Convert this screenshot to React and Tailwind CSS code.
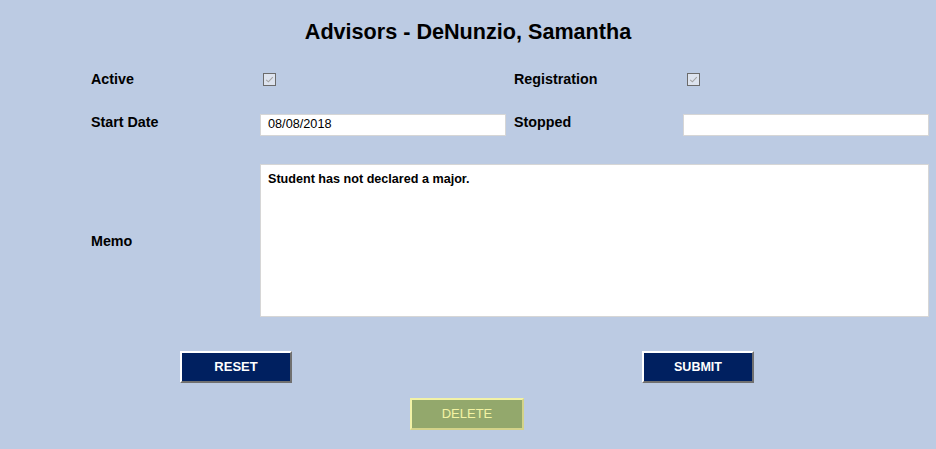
import React from 'react';

function Check() {
  return (
    <svg width="13" height="13" viewBox="0 0 13 13" className="block">
      <rect x="0.5" y="0.5" width="12" height="12" fill="#dde3ee" stroke="#6b6b6b" />
      <path d="M3.2 6.8 L5.4 8.8 L9.8 4.2" fill="none" stroke="#a3a3a3" strokeWidth="1.1" />
    </svg>
  );
}

export default function App() {
  return (
    <div
      className="w-[936px] h-[449px] bg-[#bccbe3] text-black overflow-hidden"
      style={{ fontFamily: '"Liberation Sans", Arial, sans-serif' }}
    >
      {/* Title */}
      <div className="h-[64px] flex items-center justify-center">
        <h1 className="text-[21.6px] font-bold leading-none">Advisors - DeNunzio, Samantha</h1>
      </div>

      {/* Form grid */}
      <div className="ml-[91px] grid grid-cols-[169px_254px_169px_246px]">
        {/* Row 1 */}
        <div className="h-[30px] flex items-center pt-[2px] text-[14.3px] font-bold">Active</div>
        <div className="h-[30px] flex items-center pl-[3px]">
          <Check />
        </div>
        <div className="h-[30px] flex items-center pt-[2px] text-[14.3px] font-bold">Registration</div>
        <div className="h-[30px] flex items-center pl-[4px]">
          <Check />
        </div>

        {/* Row 2 */}
        <div className="mt-[20px] h-[22px] flex items-center pb-[4px] text-[14.3px] font-bold">Start Date</div>
        <div className="mt-[20px]">
          <div className="w-[246px] h-[22px] bg-white border border-[#d6d6d6] flex items-center px-[7px] text-[12.7px]">
            08/08/2018
          </div>
        </div>
        <div className="mt-[20px] h-[22px] flex items-center pb-[4px] text-[14.3px] font-bold">Stopped</div>
        <div className="mt-[20px]">
          <div className="w-[246px] h-[22px] bg-white border border-[#d6d6d6]"></div>
        </div>

        {/* Row 3 */}
        <div className="mt-[28px] h-[153px] flex items-center pt-[2px] text-[14.3px] font-bold">Memo</div>
        <div className="mt-[28px] col-span-3">
          <div className="w-[669px] h-[153px] bg-white border border-[#d6d6d6] px-[7px] pt-[5px] text-[12.6px] font-bold">
            Student has not declared a major.
          </div>
        </div>
      </div>

      {/* Buttons */}
      <div className="mt-[34px] flex">
        <button className="ml-[180px] w-[112px] h-[32px] bg-[#002060] text-white text-[13px] font-bold border-2 border-t-white border-l-white border-r-[#707070] border-b-[#707070]">
          RESET
        </button>
        <button className="ml-[350px] w-[112px] h-[32px] bg-[#002060] text-white text-[12.5px] font-bold border-2 border-t-white border-l-white border-r-[#707070] border-b-[#707070]">
          SUBMIT
        </button>
      </div>
      <div className="mt-[15px] flex">
        <button className="ml-[410px] w-[114px] h-[32px] bg-[#93a86c] text-[#f3f3a3] text-[13px] font-medium border-2 border-t-[#f2f2a6] border-l-[#f2f2a6] border-r-[#d3d38a] border-b-[#d3d38a]">
          DELETE
        </button>
      </div>
    </div>
  );
}
